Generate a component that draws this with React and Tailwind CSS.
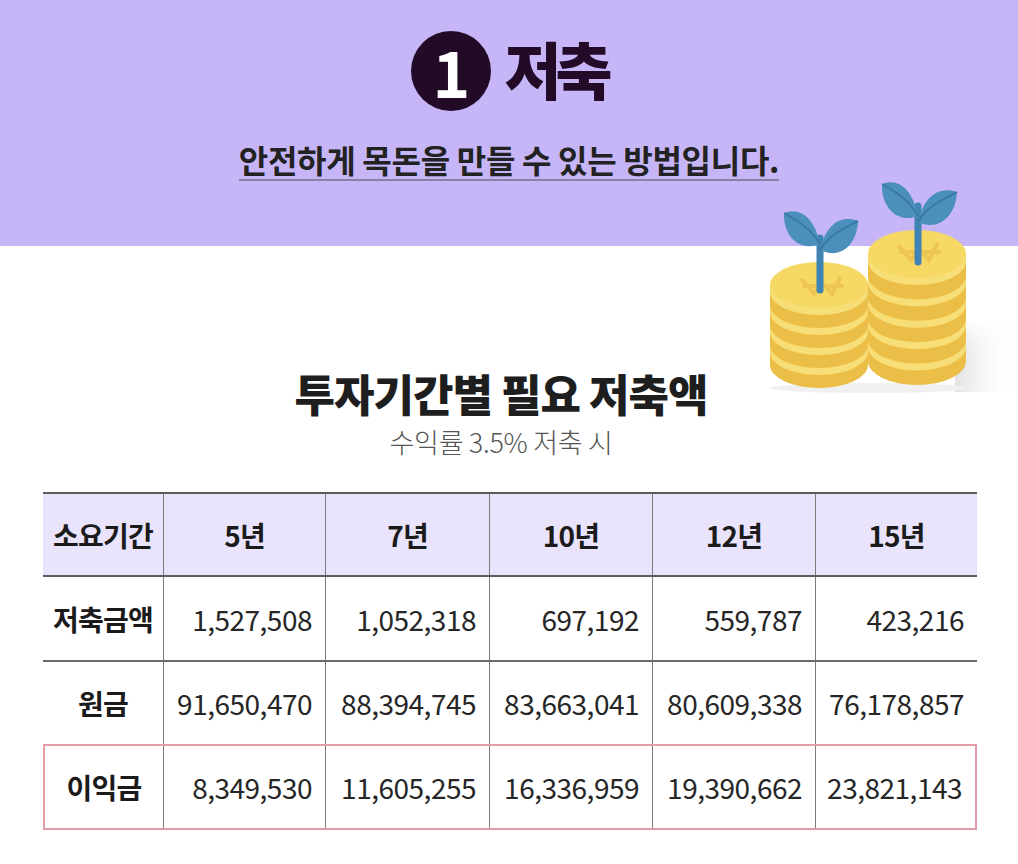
import React from 'react';

const FONT = { fontFamily: '"Noto Sans CJK KR", "Noto Sans", sans-serif' };

function Coin({ cx, cy, rx, ry, h }) {
  const side = `M${cx - rx},${cy} L${cx - rx},${cy + h} A${rx},${ry} 0 0 0 ${cx + rx},${cy + h} L${cx + rx},${cy} Z`;
  const band = `M${cx - rx},${cy} L${cx - rx},${cy + 7} A${rx},${ry} 0 0 0 ${cx + rx},${cy + 7} L${cx + rx},${cy} Z`;
  return (
    <g>
      <path d={side} fill="#ebbf47" />
      <path d={band} fill="#f8de76" />
      <ellipse cx={cx} cy={cy} rx={rx} ry={ry} fill="#f6d865" />
    </g>
  );
}

function Stack({ cx, top, rx, ry, n, step }) {
  const coins = [];
  for (let i = n - 1; i >= 0; i--) {
    coins.push(<Coin key={i} cx={cx} cy={top + ry + i * step} rx={rx} ry={ry} h={step} />);
  }
  return <g>{coins}</g>;
}

function Won({ x, y }) {
  return (
    <g stroke="#ecc552" strokeWidth="4" strokeLinecap="round" fill="none">
      <path d={`M${x - 18},${y - 4} L${x - 6},${y + 10} L${x + 2},${y - 2} L${x + 12},${y + 10} L${x + 20},${y - 6}`} />
      <path d={`M${x - 16},${y + 2} L${x + 22},${y + 2}`} />
    </g>
  );
}

function Plant({ x, stemTop, stemBottom, lTip, rTip, lBase, rBase }) {
  return (
    <g>
      <path d={`M${x},${stemBottom} L${x},${stemTop}`} stroke="#3f84b2" strokeWidth="7" strokeLinecap="round" />
      <path
        d={`M${x},${lBase} C${x - 6},${lTip[1] + 4} ${lTip[0] + 16},${lTip[1] - 6} ${lTip[0]},${lTip[1]} C${lTip[0] - 1},${lTip[1] + 24} ${x - 20},${lBase + 8} ${x},${lBase} Z`}
        fill="#4b8fbd"
      />
      <path d={`M${x},${lBase} C${x - 10},${lTip[1] + 14} ${lTip[0] + 10},${lTip[1] + 6} ${lTip[0]},${lTip[1]}`} stroke="#3c78a4" strokeWidth="2" fill="none" />
      <path
        d={`M${x},${rBase} C${x + 6},${rTip[1] + 2} ${rTip[0] - 16},${rTip[1] - 6} ${rTip[0]},${rTip[1]} C${rTip[0] - 1},${rTip[1] + 24} ${x + 20},${rBase + 10} ${x},${rBase} Z`}
        fill="#4b8fbd"
      />
      <path d={`M${x},${rBase} C${x + 10},${rTip[1] + 12} ${rTip[0] - 10},${rTip[1] + 6} ${rTip[0]},${rTip[1]}`} stroke="#3c78a4" strokeWidth="2" fill="none" />
    </g>
  );
}

function Coins() {
  return (
    <svg className="absolute left-[760px] top-[170px]" width="258" height="230" viewBox="760 170 258 230">
      <defs>
        <linearGradient id="sh" x1="0" y1="0" x2="1" y2="0">
          <stop offset="0" stopColor="#dedede" stopOpacity="0.9" />
          <stop offset="1" stopColor="#ffffff" stopOpacity="0" />
        </linearGradient>
        <linearGradient id="shv" x1="0" y1="0" x2="0" y2="1">
          <stop offset="0" stopColor="#ffffff" stopOpacity="1" />
          <stop offset="0.4" stopColor="#ffffff" stopOpacity="0" />
        </linearGradient>
      </defs>
      <polygon points="955,322 1018,322 1018,392 955,392" fill="url(#sh)" />
      <polygon points="955,318 1018,318 1018,392 955,392" fill="url(#shv)" />
      <ellipse cx="870" cy="388" rx="100" ry="5" fill="#f0f0f0" />
      <Stack cx={917} top={230} rx={49} ry={24} n={5} step={21.4} />
      <Won x={917} y={250} />
      <Plant x={918} stemTop={206} stemBottom={262} lTip={[882, 184]} rTip={[957, 192]} lBase={216} rBase={222} />
      <Stack cx={819} top={262} rx={49} ry={23} n={4} step={20} />
      <Won x={820} y={284} />
      <Plant x={820} stemTop={238} stemBottom={290} lTip={[784, 213]} rTip={[858, 221]} lBase={244} rBase={250} />
    </svg>
  );
}

const headers = ['5년', '7년', '10년', '12년', '15년'];
const rows = [
  { label: '저축금액', values: ['1,527,508', '1,052,318', '697,192', '559,787', '423,216'] },
  { label: '원금', values: ['91,650,470', '88,394,745', '83,663,041', '80,609,338', '76,178,857'] },
];
const profit = { label: '이익금', values: ['8,349,530', '11,605,255', '16,336,959', '19,390,662', '23,821,143'] };

function NumCell({ v }) {
  return (
    <div className="border-l border-[#7c7c7c] flex items-center justify-end pr-[13px] text-[28px] leading-none text-[#262626] tracking-[-0.5px]">
      {v}
    </div>
  );
}

const LABEL = 'flex items-center justify-center text-[28px] font-bold tracking-[-0.8px] text-[#1b1b1b]';
const HEAD = 'border-l border-[#7c7c7c] flex items-center justify-center text-[28px] font-bold tracking-[-0.8px] text-[#1b1b1b]';

export default function App() {
  return (
    <div className="relative w-[1018px] h-[864px] bg-white overflow-hidden" style={FONT}>
      <div className="h-[246px] bg-[#c6b6f8] flex flex-col items-center pt-[31px]">
        <div className="flex items-center gap-[13px]">
          <div className="w-[80px] h-[80px] rounded-full bg-[#230b27] flex items-center justify-center">
            <span className="text-white text-[64px] font-bold leading-none mt-[-2px]">1</span>
          </div>
          <div className="text-[62px] font-black leading-none text-[#230b27] tracking-[-6px] mt-[-6px]">저축</div>
        </div>
        <div className="mt-[30px] text-[32px] font-bold leading-[36px] text-[#222] tracking-[-0.3px] border-b-2 border-[#8a80a6] pb-[2px]">
          안전하게 목돈을 만들 수 있는 방법입니다.
        </div>
      </div>

      <Coins />

      <div className="flex flex-col items-center pr-[16px]">
        <div className="mt-[125px] text-[44px] font-black leading-none text-[#1e1e1e] tracking-[-1px]">투자기간별 필요 저축액</div>
        <div className="mt-[13px] text-[27px] font-light leading-none text-[#555] tracking-[-0.3px]">수익률 3.5% 저축 시</div>
      </div>

      <div className="ml-[43px] w-[934px] mt-[37px]">
        <div className="grid grid-cols-[120px_162px_164px_163px_163px_162px] h-[85px] border-t-2 border-b-2 border-[#5c5c5c] bg-[#e9e4fb]">
          <div className={LABEL}>소요기간</div>
          {headers.map((h) => (
            <div key={h} className={HEAD}>
              {h}
            </div>
          ))}
        </div>
        {rows.map((r, i) => (
          <div
            key={r.label}
            className={
              i === 0
                ? 'grid grid-cols-[120px_162px_164px_163px_163px_162px] h-[85px] border-b-2 border-[#6a6a6a]'
                : 'grid grid-cols-[120px_162px_164px_163px_163px_162px] h-[82px]'
            }
          >
            <div className={LABEL}>{r.label}</div>
            {r.values.map((v, j) => (
              <NumCell key={j} v={v} />
            ))}
          </div>
        ))}
        <div className="grid grid-cols-[118px_162px_164px_163px_163px_160px] h-[86px] border-2 border-[#e29ba7]">
          <div className={LABEL}>{profit.label}</div>
          {profit.values.map((v, j) => (
            <NumCell key={j} v={v} />
          ))}
        </div>
      </div>
    </div>
  );
}
